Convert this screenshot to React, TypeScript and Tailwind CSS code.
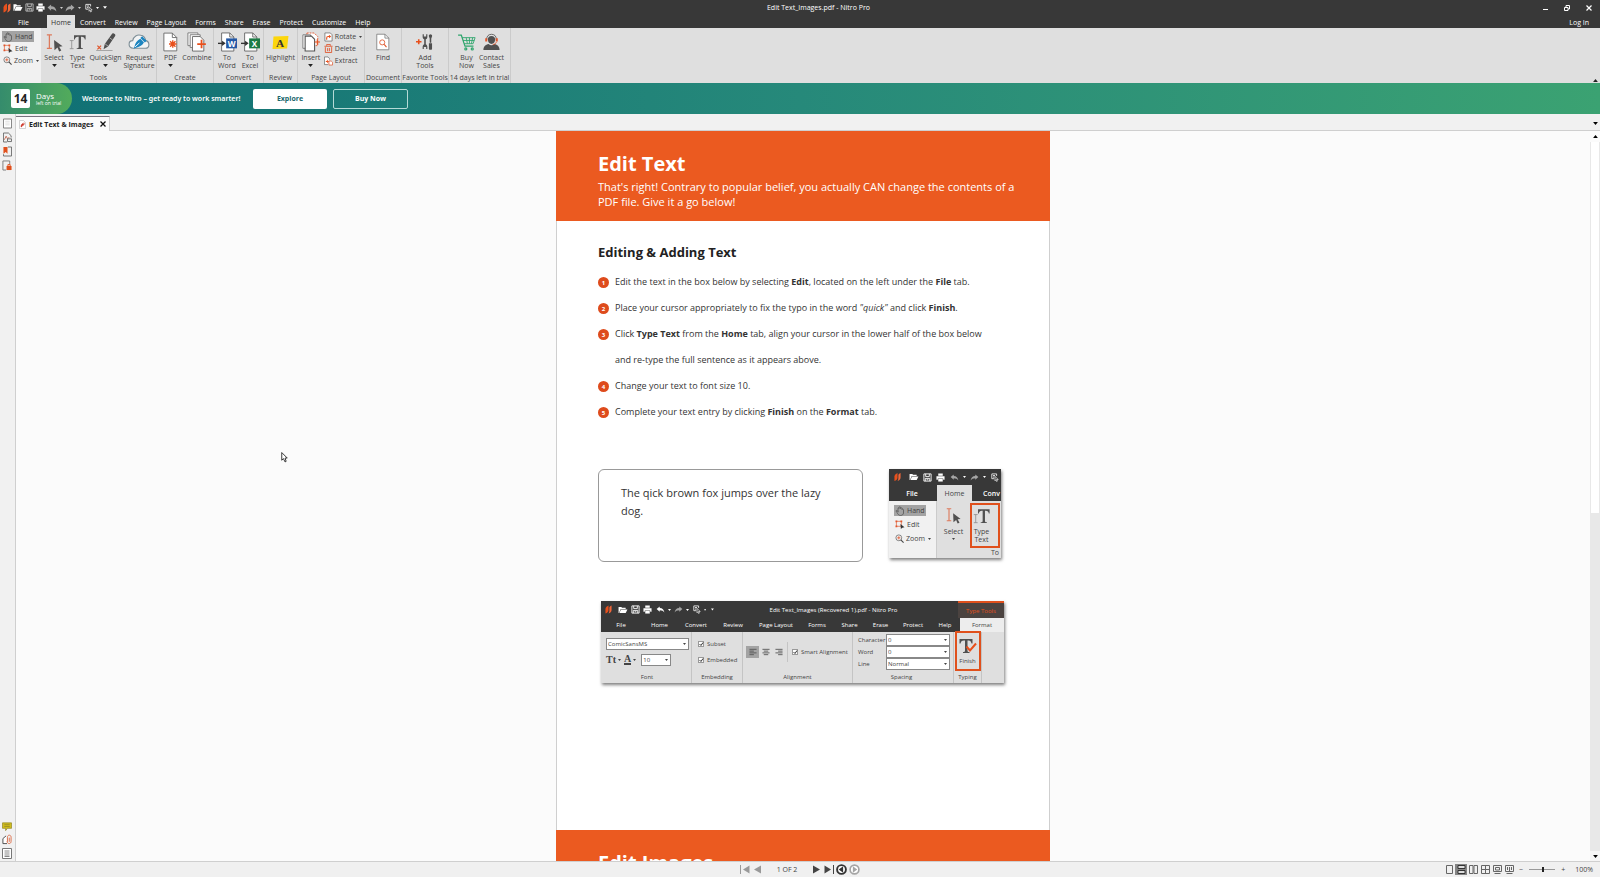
import React from "react";

type IconProps = { className?: string };

const NitroLogo = ({ className }: IconProps) => (
  <svg viewBox="0 0 16 20" className={className}>
    <path d="M1 19V9c0-3 3-6 7-8v10c0 4-3 7-7 8z" fill="#e8501c" />
    <path d="M8 19c4-1 7-4 7-8V1c-2 1-4 2-5 4v7c0 3-1 5-2 7z" fill="#f0673a" />
  </svg>
);

const FolderIcon = ({ className }: IconProps) => (
  <svg viewBox="0 0 22 18" className={className} fill="currentColor">
    <path d="M1 16V2h6l2 2h8v3H6L2 16z" />
    <path d="M6.5 8H21l-4 8H3z" />
  </svg>
);

const SaveIcon = ({ className }: IconProps) => (
  <svg viewBox="0 0 20 20" className={className} fill="none" stroke="currentColor" strokeWidth="2">
    <path d="M2 2h16v16H2z" />
    <path d="M6 2v6h8V2M5 18v-6h10v6M8 15h4" />
  </svg>
);

const PrintIcon = ({ className }: IconProps) => (
  <svg viewBox="0 0 20 20" className={className} fill="currentColor">
    <path d="M5 1h10v5H5zM1 7h18v8h-3v-3H4v3H1z" />
    <path d="M5 13h10v6H5z" />
  </svg>
);

const UndoIcon = ({ className }: IconProps) => (
  <svg viewBox="0 0 22 18" className={className} fill="currentColor">
    <path d="M9 1v4c7 0 11 4 12 12-3-4-6-6-12-6v4L1 8z" />
  </svg>
);

const RedoIcon = ({ className }: IconProps) => (
  <svg viewBox="0 0 22 18" className={className} fill="currentColor">
    <path d="M13 1v4C6 5 2 9 1 17c3-4 6-6 12-6v4l8-7z" />
  </svg>
);

const CustomSelectIcon = ({ className }: IconProps) => (
  <svg viewBox="0 0 20 22" className={className} fill="none" stroke="currentColor" strokeWidth="2">
    <path d="M8 14H2V2h12v5" />
    <path d="M5 6h5M5 10h3" />
    <path d="M10 8l8 8h-4l2 4-2 1-2-4-2 2z" strokeWidth="1.600" />
  </svg>
);

const Caret = ({ className }: IconProps) => (
  <svg viewBox="0 0 8 5" className={className} fill="currentColor">
    <path d="M0 0h8L4 5z" />
  </svg>
);

const HandIcon = ({ className }: IconProps) => (
  <svg viewBox="0 0 20 20" className={className} fill="none" stroke="#555" strokeWidth="1.6" strokeLinecap="round" strokeLinejoin="round">
    <path d="M6 11V5c0-2 2-2 2 0V3c0-2 3-2 3 0v2c0-2 3-2 3 0v2c0-2 3-1 3 1v6c0 3-3 5-6 5s-5-2-7-6l-2-3c0-2 2-1 4 1z" />
  </svg>
);

const EditIcon = ({ className }: IconProps) => (
  <svg viewBox="0 0 22 20" className={className}>
    <path d="M3 3h11v11H3z" fill="none" stroke="#e0562c" strokeWidth="1.5" />
    <path d="M1 1h4v4H1zM12 1h4v4h-4zM1 12h4v4H1z" fill="#e0562c" />
    <path d="M12 9l9 7-5 1-3 3z" fill="#333" />
  </svg>
);

const ZoomIcon = ({ className }: IconProps) => (
  <svg viewBox="0 0 20 20" className={className} fill="none">
    <circle cx="8.500" cy="8.500" r="6.500" stroke="#555" strokeWidth="1.500" />
    <path d="M13 13l6 6" stroke="#444" strokeWidth="2.400" />
    <path d="M5 8.500h7M8.500 5v7" stroke="#e0562c" strokeWidth="1.800" />
  </svg>
);

const SelectIcon = ({ className }: IconProps) => (
  <svg viewBox="0 0 40 44" className={className}>
    <path d="M2 4h12M2 36h12M8 4v32" stroke="#dd7a5c" strokeWidth="3" fill="none" />
    <path d="M19 16l20 15-8 1 5 9-5 2-4-9-7 6z" fill="#505050" />
  </svg>
);

const TypeTextIcon = ({ className }: IconProps) => (
  <svg viewBox="0 0 44 44" className={className}>
    <path d="M13 3h30v11h-2c-1-5-3-7-8-7h-2v26c0 3 1 4 5 4v2H20v-2c4 0 5-1 5-4V7h-2c-5 0-7 2-8 7h-2z" fill="#505050" />
    <path d="M2 17h10M2 38h10M7 17v21" stroke="#888" strokeWidth="2" />
  </svg>
);

const QuickSignIcon = ({ className }: IconProps) => (
  <svg viewBox="0 0 48 44" className={className}>
    <path d="M43 1c4 1 5 4 3 7L29 33l-11 7 3-13L38 3c1-2 3-3 5-2z" fill="#505050" />
    <path d="M33 12l7 5M22 27l7 5" stroke="#dedede" strokeWidth="1.500" />
    <path d="M3 31l9 9M12 31l-9 9" stroke="#e0562c" strokeWidth="3" />
    <path d="M0 43h40" stroke="#777" strokeWidth="1.500" />
  </svg>
);

const SignatureIcon = ({ className }: IconProps) => (
  <svg viewBox="0 0 48 40" className={className} fill="none">
    <path d="M11 34C4 34 2 29 2 25c0-5 4-8 8-8C12 7 20 3 28 5c7 1 10 7 11 12 5 1 7 5 7 9s-3 8-8 8z" fill="#f2f4f5" stroke="#7c8d96" strokeWidth="2.400" />
    <path d="M14 30c2-8 5-13 13-17l8 8c-4 7-9 9-16 11l-7 3z" fill="#1c85c0" />
    <path d="M15 31l10-9" stroke="#fff" strokeWidth="2" />
    <path d="M31 7l10 10-4 4-10-10z" fill="#1c85c0" />
  </svg>
);

const PdfIcon = ({ className }: IconProps) => (
  <svg viewBox="0 0 36 44" className={className} fill="none">
    <path d="M2 2h19l10 10v30H2z" fill="#fff" stroke="#666" strokeWidth="2" />
    <path d="M21 2v10h10" stroke="#666" strokeWidth="2" />
    <path d="M22 18v17M13.500 26.500h17M16 20.500l12 12M28 20.500l-12 12" stroke="#e8501c" strokeWidth="3" />
  </svg>
);

const CombineIcon = ({ className }: IconProps) => (
  <svg viewBox="0 0 44 44" className={className} fill="none">
    <path d="M2 2h22v28H2z" fill="#fff" stroke="#777" strokeWidth="2" />
    <path d="M7 6h22v28H7z" fill="#fff" stroke="#777" strokeWidth="2" />
    <path d="M12 10h17l8 8v24H12z" fill="#fff" stroke="#666" strokeWidth="2" />
    <path d="M32 17v19M22.500 26.500h19" stroke="#e8501c" strokeWidth="4" />
  </svg>
);

const ConvertIcon = ({ className, color, letter }: IconProps & { color: string; letter: string }) => (
  <svg viewBox="0 0 42 44" className={className} fill="none">
    <path d="M8 2h18l9 9v31H8z" fill="#fff" stroke="#666" strokeWidth="2" />
    <path d="M26 2v9h9" stroke="#666" strokeWidth="2" />
    <path d="M0 25h10" stroke="#333" strokeWidth="3" />
    <path d="M9 19l8 6-8 6z" fill="#333" />
    <path d="M18 14h24v22H18z" fill={color} />
    <text x="30" y="32" fill="#fff" fontSize="18" fontWeight="700" textAnchor="middle" fontFamily="Open Sans, sans-serif">
      {letter}
    </text>
  </svg>
);

const HighlightIcon = ({ className }: IconProps) => (
  <svg viewBox="0 0 36 32" className={className}>
    <path d="M3 3l32-1-3 27-31 1z" fill="#fcd60c" />
    <text x="17" y="25" fill="#333" fontSize="24" fontWeight="700" textAnchor="middle" fontFamily="Liberation Serif, serif">
      A
    </text>
  </svg>
);

const InsertIcon = ({ className }: IconProps) => (
  <svg viewBox="0 0 40 44" className={className} fill="none">
    <path d="M11 2h16l8 8v20H11z" fill="#fff" stroke="#e0562c" strokeWidth="2" strokeDasharray="4 2" />
    <path d="M2 6h17v30H2z" fill="#fff" stroke="#777" strokeWidth="2" />
    <path d="M7 9h14l7 7v26H7z" fill="#fff" stroke="#555" strokeWidth="2.400" />
    <path d="M34 16v12M28 22h12" stroke="#e8501c" strokeWidth="2.600" />
  </svg>
);

const RotateIcon = ({ className }: IconProps) => (
  <svg viewBox="0 0 20 20" className={className} fill="none">
    <path d="M2 1h12l4 4v14H2z" fill="#fff" stroke="#666" strokeWidth="1.600" />
    <path d="M6 16v-4c0-2 1-3 3-3h4" stroke="#e8501c" strokeWidth="2.400" />
    <path d="M11 5l5 4-5 4z" fill="#e8501c" />
  </svg>
);

const DeleteIcon = ({ className }: IconProps) => (
  <svg viewBox="0 0 20 20" className={className} fill="none" stroke="#e0562c" strokeWidth="2">
    <path d="M1 5h18M6 4V1h8v3M3 7v12h14V7M8 9v7M12 9v7" />
  </svg>
);

const ExtractIcon = ({ className }: IconProps) => (
  <svg viewBox="0 0 20 20" className={className} fill="none">
    <path d="M12 7V4L9 1H1v17h8" fill="#fff" stroke="#666" strokeWidth="1.600" />
    <path d="M11 10h5l3 3v6h-8z" fill="#fff" stroke="#e0562c" strokeWidth="1.600" />
    <path d="M4 11h4" stroke="#e8501c" strokeWidth="2.400" />
    <path d="M7 7l4 4-4 4z" fill="#e8501c" />
  </svg>
);

const FindIcon = ({ className }: IconProps) => (
  <svg viewBox="0 0 36 44" className={className} fill="none">
    <path d="M2 2h21l10 10v30H2z" fill="#fff" stroke="#777" strokeWidth="2" />
    <path d="M23 2v10h10" stroke="#777" strokeWidth="2" />
    <circle cx="16" cy="23" r="6.500" stroke="#e0562c" strokeWidth="2.200" />
    <path d="M21 28l6 7" stroke="#e0562c" strokeWidth="2.800" />
  </svg>
);

const AddToolsIcon = ({ className }: IconProps) => (
  <svg viewBox="0 0 46 44" className={className} fill="none">
    <path d="M7 15v13M0 21.500h14" stroke="#e8501c" strokeWidth="4" />
    <path d="M17 2v7c0 3 2 5 4 6v13c-3 2-4 4-4 7v5h3v-5h6v5h3v-5c0-3-1-5-4-7V15c3-1 4-3 4-6V2h-3v6h-6V2z" fill="#505050" />
    <path d="M37 2l4 2v4l-2 5v11h-4V13l-2-5V4zM33 25h8v14c0 4-8 4-8 0z" fill="#505050" />
  </svg>
);

const CartIcon = ({ className }: IconProps) => (
  <svg viewBox="0 0 44 42" className={className} fill="none" stroke="#2ea56c" strokeWidth="3">
    <path d="M0 3h8l9 27h21" />
    <path d="M10 9h32l-5 15H15M12 16h28M20 9l3 15M28 9v15M36 9l-3 15" strokeWidth="2.200" />
    <circle cx="19" cy="37" r="2.500" />
    <circle cx="35" cy="37" r="2.500" />
  </svg>
);

const ContactIcon = ({ className }: IconProps) => (
  <svg viewBox="0 0 42 42" className={className} fill="none">
    <path d="M21 6c6 0 9 4 9 9 0 6-4 11-9 11s-9-5-9-11c0-5 3-9 9-9z" fill="#505050" />
    <path d="M1 41c0-9 5-13 13-15 4 4 10 4 14 0 8 2 13 6 13 15z" fill="#505050" />
    <path d="M9 15C9 6 14 2 21 2s12 4 12 13" stroke="#505050" strokeWidth="2" />
    <path d="M8 12v8M34 12v8" stroke="#e0562c" strokeWidth="5" />
    <path d="M33 21c-1 4-4 6-9 6" stroke="#e0562c" strokeWidth="2" />
  </svg>
);

const FinishIcon = ({ className }: IconProps) => (
  <svg viewBox="0 0 36 32" className={className} fill="none">
    <path d="M1 2h26v9h-2c-1-4-2-6-6-6h-2v20c0 3 1 3 4 3v2H8v-2c3 0 4 0 4-3V5h-2c-5 0-6 2-7 6H1z" fill="#505050" />
    <path d="M15 17l7 8 12-14" stroke="#e8501c" strokeWidth="4" />
  </svg>
);

const Cell = ({ label, width, icon, arrow }: { label: React.ReactNode; width: string; icon: React.ReactNode; arrow?: boolean }) => (
  <button type="button" className={`flex flex-col items-center text-center ${width}`}>
    <span className="flex h-[22px] items-center justify-center">{icon}</span>
    <span className="mt-[1px] whitespace-nowrap">{label}</span>
    {arrow && <Caret className="mt-[2px] h-[3px] w-[5px] text-[#222]" />}
  </button>
);

const Group = ({ name, width, children }: { name: string; width: string; children: React.ReactNode }) => (
  <section aria-label={name} className={`flex shrink-0 flex-col justify-between border-r border-[#cbcbcb] pt-[3px] pb-px ${width}`}>
    <div className="flex justify-center">{children}</div>
    <div className="flex justify-center whitespace-nowrap">{name}</div>
  </section>
);

const SmallTool = ({ icon, label, active, caret }: { icon: React.ReactNode; label: string; active?: boolean; caret?: boolean }) => (
  <button type="button" className={`flex h-[11px] items-center gap-[2px] px-[1px] ${active ? "bg-[#a3a3a3]" : ""}`}>
    {icon}
    {label}
    {caret && <Caret className="ml-[1px] h-[2px] w-[3px]" />}
  </button>
);

const TitleBar = () => (
  <header className="bg-[#383838] text-[7px] leading-[9px] text-white">
    <div className="flex h-[15px] items-center">
      <div className="flex w-[110px] shrink-0 items-center gap-[2px] pl-[3px] *:shrink-0">
        <NitroLogo className="h-[10px] w-[8px]" />
        <button type="button" aria-label="Open"><FolderIcon className="h-[9px] w-[10px]" /></button>
        <button type="button" aria-label="Save"><SaveIcon className="h-[9px] w-[9px] text-[#bbb]" /></button>
        <button type="button" aria-label="Print"><PrintIcon className="h-[9px] w-[9px]" /></button>
        <button type="button" aria-label="Undo" className="flex items-center gap-[3px] text-[#a5a5a5]">
          <UndoIcon className="h-[8px] w-[10px]" />
          <Caret className="h-[2px] w-[3px] text-[#ccc]" />
        </button>
        <button type="button" aria-label="Redo" className="flex items-center gap-[3px] text-[#a5a5a5]">
          <RedoIcon className="h-[8px] w-[10px]" />
          <Caret className="h-[2px] w-[3px] text-[#ccc]" />
        </button>
        <button type="button" aria-label="Select mode" className="flex items-center gap-[3px] pl-[2px]">
          <CustomSelectIcon className="h-[10px] w-[8px]" />
          <Caret className="h-[2px] w-[3px]" />
        </button>
        <Caret className="ml-[2px] h-[3px] w-[4px]" />
      </div>
      <h1 className="flex-1 text-center">Edit Text_Images.pdf - Nitro Pro</h1>
      <div className="flex w-[73px] shrink-0 items-center justify-end gap-[16px] pr-[8px]">
        <button type="button" aria-label="Minimize" className="h-[5px] w-[5px] border-b border-white" />
        <button type="button" aria-label="Restore">
          <svg viewBox="0 0 12 12" className="h-[6px] w-[6px]" fill="none" stroke="currentColor" strokeWidth="2">
            <path d="M1 5h7v6H1zM4 4V1h7v7H8" />
          </svg>
        </button>
        <button type="button" aria-label="Close">
          <svg viewBox="0 0 12 12" className="h-[6px] w-[6px]" fill="none" stroke="currentColor" strokeWidth="2.400">
            <path d="M1 1l10 10M11 1L1 11" />
          </svg>
        </button>
      </div>
    </div>
    <nav className="flex h-[13px] items-stretch gap-px *:pt-px">
      <button type="button" className="-mr-px w-[47px]">File</button>
      <button type="button" className="w-[28px] bg-[#dfdfdf] text-[#333]">Home</button>
      {["Convert", "Review", "Page Layout", "Forms", "Share", "Erase", "Protect", "Customize", "Help"].map((tab) => (
        <button key={tab} type="button" className="px-[4px]">{tab}</button>
      ))}
      <a href="#login" className="ml-auto flex items-center pr-[11px]">Log In</a>
    </nav>
  </header>
);

const Ribbon = () => (
  <div className="flex h-[55px] items-stretch bg-[#dfdfdf] text-[7px] leading-[8px] text-[#444]">
    <div className="flex w-[41px] shrink-0 flex-col items-start gap-[1px] bg-[#f1f1f1] pt-[3px] pl-[2px]">
      <SmallTool active icon={<HandIcon className="h-[10px] w-[10px]" />} label="Hand" />
      <SmallTool icon={<EditIcon className="h-[9px] w-[10px]" />} label="Edit" />
      <SmallTool caret icon={<ZoomIcon className="h-[9px] w-[9px]" />} label="Zoom" />
    </div>
    <Group name="Tools" width="w-[116px]">
      <Cell width="w-[25px]" arrow label="Select" icon={<SelectIcon className="h-[19px] w-[17px]" />} />
      <Cell width="w-[22px]" label={<>Type<br />Text</>} icon={<TypeTextIcon className="h-[17px] w-[17px]" />} />
      <Cell width="w-[34px]" arrow label="QuickSign" icon={<QuickSignIcon className="h-[18px] w-[20px]" />} />
      <Cell width="w-[33px]" label={<>Request<br />Signature</>} icon={<SignatureIcon className="h-[18px] w-[22px]" />} />
    </Group>
    <Group name="Create" width="w-[57px]">
      <Cell width="w-[24px]" arrow label="PDF" icon={<PdfIcon className="h-[20px] w-[16px]" />} />
      <Cell width="w-[29px]" label="Combine" icon={<CombineIcon className="h-[20px] w-[20px]" />} />
    </Group>
    <Group name="Convert" width="w-[50px]">
      <Cell width="w-[23px]" label={<>To<br />Word</>} icon={<ConvertIcon className="h-[20px] w-[19px]" color="#2558a5" letter="W" />} />
      <Cell width="w-[23px]" label={<>To<br />Excel</>} icon={<ConvertIcon className="h-[20px] w-[19px]" color="#1c7a45" letter="X" />} />
    </Group>
    <Group name="Review" width="w-[34px]">
      <Cell width="w-[32px]" label="Highlight" icon={<HighlightIcon className="h-[15px] w-[17px]" />} />
    </Group>
    <Group name="Page Layout" width="w-[67px]">
      <Cell width="w-[24px]" arrow label="Insert" icon={<InsertIcon className="h-[20px] w-[18px]" />} />
      <div className="flex flex-col items-start gap-[1px]">
        <SmallTool caret icon={<RotateIcon className="h-[10px] w-[9px]" />} label="Rotate" />
        <SmallTool icon={<DeleteIcon className="h-[9px] w-[9px]" />} label="Delete" />
        <SmallTool icon={<ExtractIcon className="h-[10px] w-[9px]" />} label="Extract" />
      </div>
    </Group>
    <Group name="Document" width="w-[37px]">
      <Cell width="w-[24px]" label="Find" icon={<FindIcon className="h-[18px] w-[14px]" />} />
    </Group>
    <Group name="Favorite Tools" width="w-[47px]">
      <Cell width="w-[24px]" label={<>Add<br />Tools</>} icon={<AddToolsIcon className="h-[18px] w-[18px]" />} />
    </Group>
    <Group name="14 days left in trial" width="w-[62px]">
      <Cell width="w-[24px]" label={<>Buy<br />Now</>} icon={<CartIcon className="h-[17px] w-[18px]" />} />
      <Cell width="w-[26px]" label={<>Contact<br />Sales</>} icon={<ContactIcon className="h-[18px] w-[17px]" />} />
    </Group>
    <button type="button" aria-label="Collapse ribbon" className="mt-auto mr-[2px] mb-[1px] ml-auto text-[#222]">
      <Caret className="h-[3px] w-[5px] rotate-180" />
    </button>
  </div>
);

const TrialBanner = () => (
  <div className="flex h-[31px] items-center bg-linear-to-r from-[#0f6f74] via-[#26897a] to-[#3ba272] text-[7px] leading-[9px] font-semibold text-white">
    <div className="flex h-full w-[72px] shrink-0 items-center rounded-r-full bg-linear-to-r from-[#358c6c] to-[#52ab5b] pl-[11px] font-normal">
      <span className="flex h-[19px] w-[19px] items-center justify-center rounded-[2px] bg-white text-[12px] font-bold text-[#222]">14</span>
      <span className="ml-[6px] flex flex-col whitespace-nowrap">
        <span className="text-[8px]">Days</span>
        <span className="text-[5px] leading-[7px]">left on trial</span>
      </span>
    </div>
    <p className="ml-[10px] w-[171px] font-['Noto_Sans','Open_Sans',sans-serif] whitespace-nowrap">Welcome to Nitro – get ready to work smarter!</p>
    <button type="button" className="h-[20px] w-[74px] rounded-[2px] bg-white font-bold text-[#17666c]">Explore</button>
    <button type="button" className="ml-[6px] h-[20px] w-[75px] rounded-[2px] border border-[#b5dad6] font-bold">Buy Now</button>
  </div>
);

const SideRail = () => (
  <aside className="flex w-[16px] shrink-0 flex-col items-center gap-[3px] border-r border-[#cfcfcf] bg-[#f1f1f1] pt-[4px] pr-[1px] pb-[2px]">
    <button type="button" aria-label="Pages">
      <svg viewBox="0 0 20 22" className="h-[11px] w-[9px]" fill="#fff" stroke="#777" strokeWidth="2"><path d="M1 1h18v20H1z" /><path d="M5 6h10M5 10h10M5 14h10" stroke="#ddd" /></svg>
    </button>
    <button type="button" aria-label="Signatures">
      <svg viewBox="0 0 20 22" className="h-[11px] w-[9px]" fill="none" stroke="#666" strokeWidth="2"><path d="M1 1h11l6 6v4M1 1v20h8" /><path d="M3 16l4-8 3 6 4-4" stroke="#c46a54" /><path d="M10 14h9v6h-9z" /></svg>
    </button>
    <button type="button" aria-label="Bookmarks">
      <svg viewBox="0 0 20 22" className="h-[11px] w-[9px]" fill="none" stroke="#666" strokeWidth="2"><path d="M11 1h8v20H1v-4" /><path d="M1 1h9v15l-4-4-5 4z" fill="#e0501c" stroke="none" /></svg>
    </button>
    <button type="button" aria-label="Security">
      <svg viewBox="0 0 22 22" className="h-[11px] w-[10px]" fill="none" stroke="#777" strokeWidth="2"><path d="M17 8V1H2v20h7" /><path d="M10 12h11v9H10z" fill="#e0501c" stroke="none" /><path d="M13 12V9h5v3" stroke="#e0501c" /></svg>
    </button>
    <button type="button" aria-label="Comments" className="mt-auto">
      <svg viewBox="0 0 22 18" className="h-[9px] w-[10px]"><path d="M1 1h20v12h-9l-4 5v-5H1z" fill="#d0bd1c" stroke="#8d8223" strokeWidth="1.500" /><path d="M5 5h12M5 9h12" stroke="#8d8223" strokeWidth="1.500" /></svg>
    </button>
    <button type="button" aria-label="Attachments">
      <svg viewBox="0 0 22 22" className="h-[11px] w-[10px]" fill="none" strokeWidth="2"><path d="M9 3L2 9v11h9" fill="#fff" stroke="#444" /><path d="M12 16V6c0-6 8-6 8 0v9c0 7-9 6-9 0M16 7v9" stroke="#dd6b45" /></svg>
    </button>
    <button type="button" aria-label="Output">
      <svg viewBox="0 0 20 22" className="h-[11px] w-[10px]" fill="#fff" stroke="#777" strokeWidth="2"><path d="M1 1h18v20H1z" /><path d="M5 6h10M5 10h10M5 14h10M5 17h10" stroke="#888" /></svg>
    </button>
  </aside>
);

const InsetQuickTools = ({ dim }: { dim?: boolean }) => (
  <>
    <FolderIcon className="h-[8px] w-[10px] shrink-0" />
    <SaveIcon className="h-[9px] w-[9px] shrink-0" />
    <PrintIcon className="h-[9px] w-[9px] shrink-0" />
    <UndoIcon className={`ml-[1px] h-[7px] w-[9px] shrink-0 ${dim ? "text-[#a5a5a5]" : ""}`} />
    <Caret className="h-[2px] w-[3px] shrink-0" />
    <RedoIcon className="h-[7px] w-[9px] shrink-0 text-[#a5a5a5]" />
    <Caret className="h-[2px] w-[3px] shrink-0" />
    <CustomSelectIcon className="ml-[1px] h-[9px] w-[8px] shrink-0" />
  </>
);

const HomeTabFigure = () => (
  <div className="w-[112px] shrink-0 overflow-hidden bg-[#dfdfdf] text-[7px] leading-[9px] text-[#444] shadow-[1px_2px_3px_rgba(0,0,0,0.5)]">
    <div className="flex h-[16px] items-center gap-[4px] bg-[#383838] pl-[5px] text-white">
      <NitroLogo className="mr-[4px] h-[10px] w-[7px] shrink-0" />
      <InsetQuickTools dim />
    </div>
    <div className="flex h-[16px] bg-[#383838] text-white">
      <button type="button" className="w-[48px] shrink-0 pr-[2px] font-semibold">File</button>
      <button type="button" className="w-[35px] shrink-0 bg-[#dfdfdf] text-[#444]">Home</button>
      <button type="button" className="flex-1 pr-px text-right font-semibold">Conv</button>
    </div>
    <div className="flex h-[57px]">
      <div className="flex w-[48px] shrink-0 flex-col items-start gap-[3px] border-r border-[#cbcbcb] bg-[#f1f1f1] pt-[4px] pl-[5px]">
        <SmallTool active icon={<HandIcon className="h-[10px] w-[10px]" />} label="Hand" />
        <SmallTool icon={<EditIcon className="h-[9px] w-[10px]" />} label="Edit" />
        <SmallTool caret icon={<ZoomIcon className="h-[9px] w-[9px]" />} label="Zoom" />
      </div>
      <div className="flex flex-1 pt-[2px]">
        <div className="flex w-[33px] shrink-0 flex-col items-center pt-[4px]">
          <SelectIcon className="h-[17px] w-[15px]" />
          <span className="mt-[3px]">Select</span>
          <Caret className="mt-[2px] h-[2px] w-[3px]" />
        </div>
        <div className="flex w-[30px] shrink-0 flex-col">
          <div className="flex h-[45px] flex-col items-center border-2 border-[#e0501c] pt-[3px] pr-[7px] text-center leading-[8px]">
            <TypeTextIcon className="h-[17px] w-[17px] shrink-0" />
            <span className="mt-[3px]">Type<br />Text</span>
          </div>
          <span className="pr-px text-right">To</span>
        </div>
      </div>
    </div>
  </div>
);

const Check = ({ label }: { label: string }) => (
  <label className="flex items-center gap-[3px] whitespace-nowrap">
    <span className="grid h-[6px] w-[6px]">
      <input type="checkbox" defaultChecked className="col-start-1 row-start-1 h-[6px] w-[6px] appearance-none border border-[#999] bg-white" />
      <svg viewBox="0 0 12 12" className="pointer-events-none z-10 col-start-1 row-start-1 h-[6px] w-[6px]" fill="none" stroke="#333" strokeWidth="2">
        <path d="M3 6l3 3 4-6" />
      </svg>
    </span>
    {label}
  </label>
);

const Picker = ({ value, width, label }: { value: string; width: string; label: string }) => (
  <span className={`grid h-[12px] items-center ${width}`}>
    <select aria-label={label} className="col-start-1 row-start-1 h-full w-full appearance-none border border-[#888] bg-white px-[1px] text-[6px] leading-[8px]">
      <option>{value}</option>
    </select>
    <Caret className="pointer-events-none col-start-1 row-start-1 mr-[3px] h-[2px] w-[3px] justify-self-end" />
  </span>
);

const insetTabs = [
  ["Home", "w-[37px]"],
  ["Convert", "w-[36px]"],
  ["Review", "w-[38px]"],
  ["Page Layout", "w-[48px]"],
  ["Forms", "w-[34px]"],
  ["Share", "w-[31px]"],
  ["Erase", "w-[31px]"],
  ["Protect", "w-[34px]"],
  ["Help", "w-[30px]"],
];

const FormatTabFigure = () => (
  <div className="ml-[3px] w-[403px] bg-[#dfdfdf] text-[6px] leading-[8px] text-[#444] shadow-[1px_2px_3px_rgba(0,0,0,0.5)]">
    <div className="flex h-[17px] items-stretch bg-[#383838] text-white">
      <div className="flex w-[113px] items-center gap-[3px] pl-[4px]">
        <NitroLogo className="mr-[3px] h-[9px] w-[7px] shrink-0" />
        <InsetQuickTools />
        <Caret className="h-[2px] w-[3px]" />
        <Caret className="ml-[2px] h-[3px] w-[4px]" />
      </div>
      <div className="flex flex-1 items-center justify-center pr-[5px]">Edit Text_Images (Recovered 1).pdf - Nitro Pro</div>
      <div className="flex w-[46px] items-center justify-center border-t-2 border-[#e0501c] bg-[#4b4340] text-[#e0501c]">Type Tools</div>
    </div>
    <div className="flex h-[14px] bg-[#383838] text-white">
      <button type="button" className="w-[40px] shrink-0">File</button>
      {insetTabs.map(([tab, width]) => (
        <button key={tab} type="button" className={`shrink-0 whitespace-nowrap ${width}`}>{tab}</button>
      ))}
      <button type="button" className="ml-auto w-[44px] bg-[#ededed] text-[#444]">Format</button>
    </div>
    <div className="flex h-[51px]">
      <div className="flex w-[91px] flex-col justify-between border-r border-[#c4c4c4] pt-[6px] pb-[2px] pl-[5px]">
        <div className="flex flex-col gap-[4px]">
          <Picker label="Font family" value="ComicSansMS" width="w-[83px]" />
          <div className="flex items-center">
            <span className="font-['Liberation_Serif',serif] text-[10px] font-bold">Tt</span>
            <Caret className="ml-[2px] h-[2px] w-[3px]" />
            <span className="ml-[3px] border-b-2 border-[#444] font-['Liberation_Serif',serif] text-[10px] font-bold">A</span>
            <Caret className="mr-[5px] ml-[2px] h-[2px] w-[3px]" />
            <Picker label="Font size" value="10" width="w-[30px]" />
          </div>
        </div>
        <span className="pr-[3px] text-center">Font</span>
      </div>
      <div className="flex w-[51px] flex-col justify-between border-r border-[#c4c4c4] pt-[8px] pb-[2px]">
        <div className="flex flex-col gap-[8px] pl-[6px]">
          <Check label="Subset" />
          <Check label="Embedded" />
        </div>
        <span className="text-center">Embedding</span>
      </div>
      <div className="flex w-[110px] flex-col justify-between border-r border-[#c4c4c4] pt-[10px] pb-[2px]">
        <div className="flex h-[20px] items-center pl-[3px]">
          {["M1 3h16M1 7h10M1 11h16M1 15h10", "M1 3h16M4 7h10M1 11h16M4 15h10", "M1 3h16M7 7h10M1 11h16M7 15h10"].map((d, i) => (
            <button key={d} type="button" aria-label="Align" className={`flex h-[12px] w-[13px] items-center justify-center ${i === 0 ? "bg-[#a3a3a3]" : ""}`}>
              <svg viewBox="0 0 18 18" className="h-[8px] w-[8px]" fill="none" stroke="#555" strokeWidth="2"><path d={d} /></svg>
            </button>
          ))}
          <span className="mr-[4px] ml-[2px] h-full border-l border-[#c4c4c4]" />
          <Check label="Smart Alignment" />
        </div>
        <span className="text-center">Alignment</span>
      </div>
      <div className="flex w-[101px] flex-col justify-between border-r border-[#c4c4c4] pt-[2px] pb-[2px] pl-[5px]">
        <div className="flex flex-col">
          {[["Character", "0"], ["Word", "0"], ["Line", "Normal"]].map(([name, value]) => (
            <div key={name} className="flex items-center">
              <span className="w-[28px]">{name}</span>
              <Picker label={name} value={value} width="w-[64px]" />
            </div>
          ))}
        </div>
        <span className="pr-[8px] text-center">Spacing</span>
      </div>
      <div className="flex w-[28px] flex-col items-center justify-between border-r border-[#c4c4c4] pb-[2px]">
        <button type="button" className="-mt-[1px] flex h-[40px] w-[26px] flex-col items-center justify-center gap-[3px] border-2 border-[#e0501c]">
          <FinishIcon className="h-[16px] w-[18px]" />
          Finish
        </button>
        <span>Typing</span>
      </div>
    </div>
  </div>
);

const steps = [
  <>Edit the text in the box below by selecting <b>Edit</b>, located on the left under the <b>File</b> tab.</>,
  <>Place your cursor appropriately to fix the typo in the word <i>"quick"</i> and click <b>Finish</b>.</>,
  <>Click <b>Type Text</b> from the <b>Home</b> tab, align your cursor in the lower half of the box below<br />and re-type the full sentence as it appears above.</>,
  <>Change your text to font size 10.</>,
  <>Complete your text entry by clicking <b>Finish</b> on the <b>Format</b> tab.</>,
];

const DocumentPages = () => (
  <div className="mx-auto w-[494px]">
    <article className="min-h-[699px] border-x border-[#cfcfcf] bg-white">
      <div className="-mx-px bg-[#eb5a20] px-[42px] pt-[21px] pb-[12px] text-white">
        <h2 className="text-[20px] leading-[24px] font-bold">Edit Text</h2>
        <p className="mt-[3px] text-[11px] leading-[15px] whitespace-nowrap">
          That's right! Contrary to popular belief, you actually CAN change the contents of a<br />PDF file. Give it a go below!
        </p>
      </div>
      <div className="pt-[21px] pl-[41px] text-[#333]">
        <h3 className="text-[13px] leading-[20px] font-bold text-[#222]">Editing &amp; Adding Text</h3>
        <ol className="mt-[7px] text-[9px] leading-[26px] whitespace-nowrap">
          {steps.map((step, i) => (
            <li key={i} className="flex items-start">
              <span className="mt-[8px] mr-[6px] flex h-[11px] w-[11px] items-center justify-center rounded-full bg-[#de4b1c] text-[6px] leading-none font-bold text-white">{i + 1}</span>
              <span>{step}</span>
            </li>
          ))}
        </ol>
        <div className="mt-[44px] flex items-start gap-[26px]">
          <p className="h-[93px] w-[265px] rounded-[6px] border border-[#999] px-[22px] pt-[14px] text-[11px] leading-[18px]">
            The qick brown fox jumps over the lazy dog.
          </p>
          <HomeTabFigure />
        </div>
        <div className="mt-[39px]">
          <FormatTabFigure />
        </div>
      </div>
    </article>
    <article className="bg-[#eb5a20] px-[42px] pt-[21px] pb-[45px] text-white">
      <h2 className="text-[20px] leading-[24px] font-bold">Edit Images</h2>
    </article>
  </div>
);

const StatusBar = () => (
  <footer className="grid h-[16px] shrink-0 grid-cols-[1fr_auto_1fr] items-center border-t border-[#cfcfcf] bg-[#f0f0f0] text-[7px] leading-[9px] text-[#444]">
    <span />
    <div className="flex items-center gap-[4px]">
      <button type="button" aria-label="First page" className="text-[#999]">
        <svg viewBox="0 0 20 18" className="h-[9px] w-[10px]" fill="currentColor"><path d="M0 0h2v18H0zM19 1v16L6 9z" /></svg>
      </button>
      <button type="button" aria-label="Previous page" className="text-[#999]">
        <svg viewBox="0 0 14 18" className="h-[9px] w-[7px]" fill="currentColor"><path d="M14 1v16L0 9z" /></svg>
      </button>
      <input aria-label="Page" defaultValue="1 OF 2" className="mx-[4px] w-[36px] bg-transparent text-center" />
      <button type="button" aria-label="Next page">
        <svg viewBox="0 0 14 18" className="h-[9px] w-[7px]" fill="currentColor"><path d="M0 1v16l14-8z" /></svg>
      </button>
      <button type="button" aria-label="Last page">
        <svg viewBox="0 0 20 18" className="h-[9px] w-[10px]" fill="currentColor"><path d="M18 0h2v18h-2zM1 1v16l13-8z" /></svg>
      </button>
      <button type="button" aria-label="Previous view" className="-ml-[2px]">
        <svg viewBox="0 0 20 20" className="h-[11px] w-[11px]"><circle cx="10" cy="10" r="8" fill="#fff" stroke="#333" strokeWidth="3.500" /><path d="M13 4v12l-8-6z" fill="#333" /></svg>
      </button>
      <button type="button" aria-label="Next view" className="-ml-[2px]">
        <svg viewBox="0 0 20 20" className="h-[11px] w-[11px]"><circle cx="10" cy="10" r="8" fill="#fff" stroke="#a5a5a5" strokeWidth="3" /><path d="M7 4v12l8-6z" fill="#a5a5a5" /></svg>
      </button>
    </div>
    <div className="flex items-center justify-end gap-[4px] pr-[7px]">
      <div className="flex items-center">
        {[
          ["Single page", "M3 1h12v16H3z"],
          ["Continuous", "M2 1h14v6H2zM2 11h14v6H2z"],
          ["Facing", "M1 1h7v16H1zM10 1h7v16h-7z"],
          ["Continuous facing", "M1 1h16v16H1zM9 1v16M1 9h16"],
          ["Full screen", "M1 1h16v12H1zM5 5h8v5H5zM3 17h12"],
          ["Presentation", "M1 1h16v12H1zM5 4v6M9 4v8M13 4v6M3 17h12"],
        ].map(([name, d], i) => (
          <button key={name} type="button" aria-label={name} className={`flex h-[11px] w-[12px] items-center justify-center ${i === 1 ? "bg-[#858585] text-[#333]" : "text-[#666]"}`}>
            <svg viewBox="0 0 18 18" className="h-[9px] w-[9px]" fill={i === 1 ? "#ddd" : "none"} stroke="currentColor" strokeWidth="2"><path d={d} /></svg>
          </button>
        ))}
      </div>
      <button type="button" aria-label="Zoom out">−</button>
      <input
        type="range"
        aria-label="Zoom"
        defaultValue={52}
        className="mx-[2px] h-[5px] w-[26px] appearance-none bg-[linear-gradient(#999,#999)] bg-[length:100%_1px] bg-center bg-no-repeat [&::-webkit-slider-thumb]:h-[5px] [&::-webkit-slider-thumb]:w-[2px] [&::-webkit-slider-thumb]:appearance-none [&::-webkit-slider-thumb]:bg-[#222]"
      />
      <button type="button" aria-label="Zoom in">+</button>
      <span className="ml-[6px]">100%</span>
    </div>
  </footer>
);

const App = () => (
  <div className="flex h-screen flex-col overflow-hidden bg-[#f1f1f1] font-['Open_Sans',sans-serif]">
    <TitleBar />
    <Ribbon />
    <TrialBanner />
    <div className="flex min-h-0 flex-1">
      <SideRail />
      <div className="flex min-w-0 flex-1 flex-col">
        <div className="flex h-[17px] shrink-0 items-end border-b border-[#cfcfcf] text-[7px] leading-[9px]">
          <div className="-mb-px flex h-[15px] w-[94px] items-center border-t border-r border-t-[#77727d] border-r-[#cfcfcf] bg-[#fbfbfb] pl-[3px] font-bold text-[#222]">
            <svg viewBox="0 0 14 18" className="mr-[3px] h-[9px] w-[7px]"><path d="M1 1h8l4 4v12H1z" fill="#fff" stroke="#aaa" /><path d="M4 14c0-4 1-6 4-7 0 4-1 6-4 7zM8 11c2-1 3-3 2-6" fill="#c92a1c" stroke="#c92a1c" /></svg>
            Edit Text &amp; Images
            <button type="button" aria-label="Close tab" className="mr-[3px] ml-auto">
              <svg viewBox="0 0 12 12" className="h-[6px] w-[6px]" fill="none" stroke="#111" strokeWidth="2.600"><path d="M1 1l10 10M11 1L1 11" /></svg>
            </button>
          </div>
          <button type="button" aria-label="Open documents" className="mr-[2px] mb-[5px] ml-auto"><Caret className="h-[3px] w-[5px]" /></button>
        </div>
        <div className="flex min-h-0 flex-1">
          <main className="relative min-w-0 flex-1 overflow-hidden bg-[#fbfbfb]">
            <DocumentPages />
            <svg viewBox="0 0 12 20" className="absolute top-[321px] left-[265px] h-[11px] w-[7px]" fill="#fff" stroke="#222" strokeWidth="1.600">
              <path d="M1 1v14l3-3 3 6 2-1-2-6h4z" />
            </svg>
          </main>
          <div className="flex w-[10px] shrink-0 flex-col items-center bg-[#e8e8e8]">
            <button type="button" aria-label="Scroll up" className="flex h-[11px] w-full items-center justify-center bg-[#fbfbfb]"><Caret className="h-[3px] w-[5px] rotate-180" /></button>
            <div className="w-full flex-[371] border-x border-[#e8e8e8] bg-white" />
            <div className="flex-[338]" />
            <button type="button" aria-label="Scroll down" className="flex h-[10px] w-full items-center justify-center bg-[#f5f5f5]"><Caret className="h-[3px] w-[5px]" /></button>
          </div>
        </div>
      </div>
    </div>
    <StatusBar />
  </div>
);

export default App;
